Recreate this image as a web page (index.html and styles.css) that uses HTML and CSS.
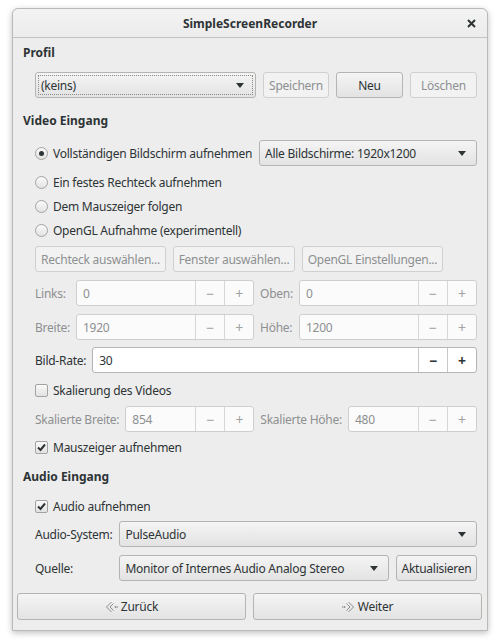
FILE: index.html
```html
<!DOCTYPE html>
<html lang="de">
<head>
<meta charset="utf-8">
<title>SimpleScreenRecorder</title>
<link rel="stylesheet" href="styles.css">
</head>
<body>
<div class="window">
  <div class="titlebar">
    <span></span>
    <span class="title">SimpleScreenRecorder</span>
    <span class="close"><svg width="9" height="9" viewBox="0 0 9 9"><path d="M1 1 L8 8 M8 1 L1 8" stroke="#2e3436" stroke-width="2" fill="none"/></svg></span>
  </div>
  <div class="content">
    <div class="heading h-profil">Profil</div>
    <div class="row profile-row indent">
      <div class="combo focus combo-profile"><span class="focusring"><span class="ctext">(keins)</span><span class="arrow"></span></span></div>
      <div class="btn disabled w-speichern">Speichern</div>
      <div class="btn w-neu">Neu</div>
      <div class="btn disabled w-loeschen">Löschen</div>
    </div>

    <div class="heading h-video">Video Eingang</div>
    <div class="row radio-row1 indent">
      <div class="opt"><span class="radio checked"></span><span>Vollständigen Bildschirm aufnehmen</span></div>
      <div class="combo combo-screens"><span class="ctext">Alle Bildschirme: 1920x1200</span><span class="arrow"></span></div>
    </div>
    <div class="opt line indent r2"><span class="radio"></span><span>Ein festes Rechteck aufnehmen</span></div>
    <div class="opt line indent"><span class="radio"></span><span>Dem Mauszeiger folgen</span></div>
    <div class="opt line indent"><span class="radio"></span><span>OpenGL Aufnahme (experimentell)</span></div>
    <div class="row btn-row indent">
      <div class="btn disabled w-rechteck">Rechteck auswählen...</div>
      <div class="btn disabled w-fenster">Fenster auswählen...</div>
      <div class="btn disabled w-opengl">OpenGL Einstellungen...</div>
    </div>

    <div class="grid4 indent geo">
      <span class="lbl dis">Links:</span>
      <div class="spin disabled"><span class="sval">0</span><span class="sb">−</span><span class="sb">+</span></div>
      <span class="lbl dis">Oben:</span>
      <div class="spin disabled"><span class="sval">0</span><span class="sb">−</span><span class="sb">+</span></div>
      <span class="lbl dis">Breite:</span>
      <div class="spin disabled"><span class="sval">1920</span><span class="sb">−</span><span class="sb">+</span></div>
      <span class="lbl dis">Höhe:</span>
      <div class="spin disabled"><span class="sval">1200</span><span class="sb">−</span><span class="sb">+</span></div>
    </div>

    <div class="row rate-row indent">
      <span class="lbl">Bild-Rate:</span>
      <div class="spin active"><span class="sval">30</span><span class="sb">−</span><span class="sb">+</span></div>
    </div>

    <div class="opt line indent cb-scale"><span class="check"></span><span>Skalierung des Videos</span></div>

    <div class="grid4 indent scaled">
      <span class="lbl dis">Skalierte Breite:</span>
      <div class="spin disabled"><span class="sval">854</span><span class="sb">−</span><span class="sb">+</span></div>
      <span class="lbl dis">Skalierte Höhe:</span>
      <div class="spin disabled"><span class="sval">480</span><span class="sb">−</span><span class="sb">+</span></div>
    </div>

    <div class="opt line indent cb-mouse"><span class="check checked"><svg width="11" height="11" viewBox="0 0 11 11"><path d="M2 5.5 L4.5 8 L9 2.5" stroke="#2e3436" stroke-width="2" fill="none"/></svg></span><span>Mauszeiger aufnehmen</span></div>

    <div class="heading h-audio">Audio Eingang</div>
    <div class="opt line indent cb-audio"><span class="check checked"><svg width="11" height="11" viewBox="0 0 11 11"><path d="M2 5.5 L4.5 8 L9 2.5" stroke="#2e3436" stroke-width="2" fill="none"/></svg></span><span>Audio aufnehmen</span></div>

    <div class="audio-grid indent">
      <span class="lbl">Audio-System:</span>
      <div class="combo span2"><span class="ctext">PulseAudio</span><span class="arrow"></span></div>
      <span class="lbl">Quelle:</span>
      <div class="combo"><span class="ctext">Monitor of Internes Audio Analog Stereo</span><span class="arrow"></span></div>
      <div class="btn w-akt">Aktualisieren</div>
    </div>
  </div>
  <div class="nav-row">
    <div class="btn nav"><svg width="13" height="12" viewBox="0 0 13 12"><path d="M6.5 1 L1.5 6 L6.5 11 M8.5 2.5 L5 6 L8.5 9.5" stroke="#8a8c8c" stroke-width="1" fill="none"/><circle cx="10.5" cy="6" r="0.9" fill="#8a8c8c"/><circle cx="12.3" cy="6" r="0.7" fill="#8a8c8c"/></svg><span>Zurück</span></div>
    <div class="btn nav"><svg width="13" height="12" viewBox="0 0 13 12"><path d="M6.5 1 L11.5 6 L6.5 11 M4.5 2.5 L8 6 L4.5 9.5" stroke="#8a8c8c" stroke-width="1" fill="none"/><circle cx="2.5" cy="6" r="0.9" fill="#8a8c8c"/><circle cx="0.7" cy="6" r="0.7" fill="#8a8c8c"/></svg><span>Weiter</span></div>
  </div>
</div>
</body>
</html>
```

FILE: styles.css
```css
* { box-sizing: border-box; }
html, body { margin: 0; padding: 0; }
body {
  background: #ffffff;
  font-family: "Noto Sans", "Open Sans", sans-serif;
  font-size: 12px;
  letter-spacing: -0.25px;
  color: #2e3436;
  width: 500px;
  height: 640px;
  overflow: hidden;
}
.window {
  margin: 8px 0 0 12px;
  width: 476px;
  height: 623px;
  background: #ededed;
  border: 1px solid #b9b9b6;
  border-radius: 6px 6px 0 0;
  box-shadow: 0 2px 6px rgba(0,0,0,0.25);
}
.titlebar {
  height: 29px;
  display: grid;
  grid-template-columns: 1fr auto 1fr;
  align-items: center;
  background: linear-gradient(#f3f3f3, #ececec);
  border-bottom: 1px solid #c3c3c1;
  border-radius: 6px 6px 0 0;
}
.title { font-weight: bold; font-size: 12px; letter-spacing: 0; }
.close { justify-self: end; margin-right: 11px; display: flex; align-items: center; }
.content { padding: 0 10px; }
.indent { margin-left: 12px; }
.heading { font-weight: bold; height: 18px; line-height: 18px; letter-spacing: 0; }
.h-profil { margin-top: 6px; }
.h-video { margin-top: 14px; }
.h-audio { margin-top: 9px; }
.row { display: flex; align-items: center; }
.profile-row { margin-top: 10px; height: 26px; gap: 7px; }
.btn {
  height: 26px;
  border: 1px solid #b4b4b1;
  border-radius: 3px;
  background: linear-gradient(#f4f4f4, #e3e3e3);
  display: flex;
  align-items: center;
  justify-content: center;
  white-space: nowrap;
  color: #2e3436;
}
.btn.disabled {
  background: #f2f2f2;
  border-color: #d0d0ce;
  color: #8d9091;
}
.combo {
  height: 26px;
  min-width: 0;
  border: 1px solid #b4b4b1;
  border-radius: 3px;
  background: linear-gradient(#f4f4f4, #e3e3e3);
  display: flex;
  align-items: center;
  padding: 0 10px 0 5px;
  white-space: nowrap;
}
.combo .ctext { flex: 1; overflow: hidden; }
.arrow {
  width: 0; height: 0;
  border-left: 4.5px solid transparent;
  border-right: 4.5px solid transparent;
  border-top: 5px solid #2e3436;
}
.combo.focus { padding: 2px; }
.focusring {
  flex: 1; height: 100%;
  border: 1px dotted #8a8a8a;
  display: flex; align-items: center;
  padding: 0 8px 0 2px;
}
.combo-profile { width: 221px; }
.w-speichern { width: 66px; }
.w-neu { width: 67px; }
.w-loeschen { width: 67px; }
.radio-row1 { margin-top: 10px; height: 26px; }
.radio-row1 .opt { width: 224px; }
.combo-screens { flex: 1; }
.opt { display: flex; align-items: center; white-space: nowrap; }
.line { height: 24px; }
.r2 { margin-top: 4px; }
.radio {
  width: 13px; height: 13px;
  border: 1px solid #a3a3a0;
  border-radius: 50%;
  background: linear-gradient(#fafafa, #e2e2e2);
  margin-right: 5px;
  display: flex; align-items: center; justify-content: center;
}
.radio.checked::after {
  content: "";
  width: 5px; height: 5px; border-radius: 50%;
  background: #2e3436;
}
.check {
  width: 13px; height: 13px;
  border: 1px solid #a3a3a0;
  border-radius: 2px;
  background: linear-gradient(#fafafa, #e2e2e2);
  margin-right: 5px;
  display: flex; align-items: center; justify-content: center;
}
.btn-row { margin-top: 4px; height: 26px; gap: 7px; }
.w-rechteck { width: 131px; }
.w-fenster { width: 122px; }
.w-opengl { width: 141px; }
.grid4 {
  display: grid;
  grid-template-columns: auto 1fr auto 1fr;
  column-gap: 6px;
  row-gap: 8px;
  align-items: center;
}
.geo { margin-top: 8px; }
.lbl { white-space: nowrap; }
.lbl.dis { color: #8d9091; }
.spin {
  height: 26px;
  min-width: 0;
  display: flex;
  border: 1px solid #b4b4b1;
  border-radius: 3px;
  background: #ffffff;
  align-items: stretch;
}
.spin .sval { flex: 1; display: flex; align-items: center; padding-left: 6px; }
.spin .sb {
  width: 29px;
  border-left: 1px solid #c8c8c6;
  display: flex; align-items: center; justify-content: center;
  font-size: 14px;
}
.spin.disabled { background: #fbfbfb; border-color: #cfcfcd; color: #8d9091; }
.spin.disabled .sb { color: #a0a2a2; border-left-color: #d6d6d4; }
.spin.active .sb { font-weight: bold; color: #2e3436; }
.rate-row { margin-top: 7px; height: 26px; gap: 6px; }
.rate-row .spin { flex: 1; }
.cb-scale { margin-top: 5px; }
.scaled { margin-top: 4px; }
.cb-mouse { margin-top: 3px; }
.cb-audio { margin-top: 8px; }
.audio-grid {
  margin-top: 3px;
  display: grid;
  grid-template-columns: auto 1fr auto;
  column-gap: 7px;
  row-gap: 8px;
  align-items: center;
}
.span2 { grid-column: span 2; }
.w-akt { width: 81px; padding: 0 4px; }
.nav-row {
  display: flex;
  gap: 7px;
  margin-top: 12px;
  padding: 0 5px 0 4px;
}
.btn.nav { flex: 1; height: 27px; gap: 3px; }
```
